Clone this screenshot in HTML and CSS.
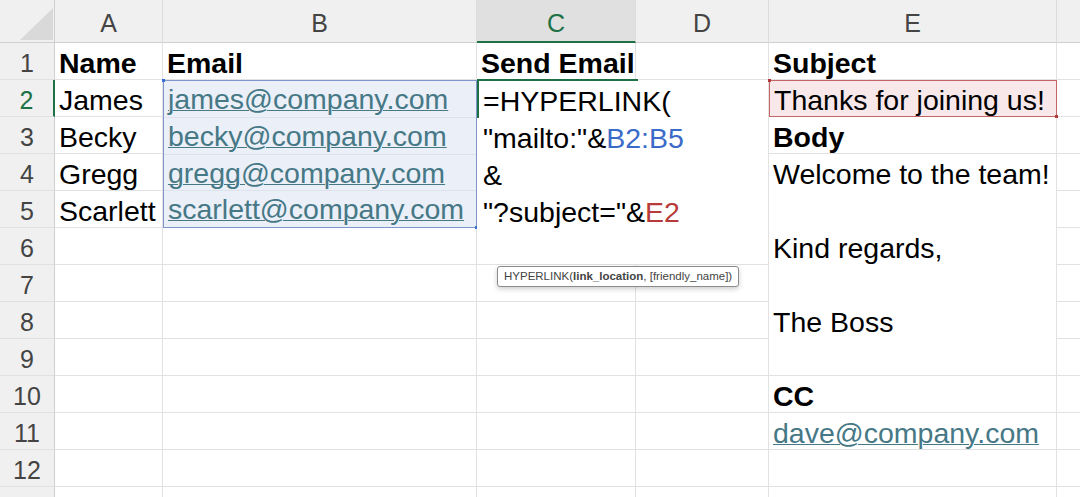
FILE: index.html
```html
<!DOCTYPE html>
<html>
<head>
    <meta charset="UTF-8">
    <title>Send Email</title>
    <link rel="stylesheet" href="styles.css">
</head>
<body>
    <div class="sheet">
        <!-- column headers -->
        <div class="corner">
            <svg width="54" height="42" viewBox="0 0 54 42"><polygon points="20,40 53,40 53,8" fill="#d9d9d9"/></svg>
        </div>
        <div class="ch">A</div>
        <div class="ch">B</div>
        <div class="ch ch-active">C</div>
        <div class="ch">D</div>
        <div class="ch">E</div>
        <div class="ch"></div>

        <!-- row 1 -->
        <div class="rh">1</div>
        <div class="cell b">Name</div>
        <div class="cell b">Email</div>
        <div class="cell b">Send Email</div>
        <div class="cell"></div>
        <div class="cell b">Subject</div>
        <div class="cell"></div>

        <!-- row 2 -->
        <div class="rh rh-active">2</div>
        <div class="cell">James</div>
        <div class="range">
            <div class="rc"><span class="link">james@company.com</span></div>
            <div class="rc"><span class="link">becky@company.com</span></div>
            <div class="rc"><span class="link">gregg@company.com</span></div>
            <div class="rc"><span class="link">scarlett@company.com</span></div>
        </div>
        <div class="editor">
            <div>=HYPERLINK(</div>
            <div>"mailto:"&amp;<span class="ref-b">B2:B5</span></div>
            <div>&amp;</div>
            <div>"?subject="&amp;<span class="ref-e">E2</span></div>
        </div>
        <div class="cell subject">Thanks for joining us!</div>
        <div class="cell"></div>

        <!-- row 3 -->
        <div class="rh">3</div>
        <div class="cell">Becky</div>
        <div class="cell b">Body</div>
        <div class="cell"></div>

        <!-- row 4 -->
        <div class="rh">4</div>
        <div class="cell">Gregg</div>
        <div class="body-text">Welcome to the team!<br><br>Kind regards,<br><br>The Boss</div>
        <div class="cell"></div>

        <!-- row 5 -->
        <div class="rh">5</div>
        <div class="cell">Scarlett</div>
        <div class="cell"></div>

        <!-- row 6 -->
        <div class="rh">6</div>
        <div class="cell"></div>
        <div class="cell"></div>
        <div class="cell"></div>

        <!-- row 7 -->
        <div class="rh">7</div>
        <div class="cell"></div>
        <div class="cell"></div>
        <div class="cell"></div>
        <div class="cell"></div>
        <div class="cell"></div>

        <!-- row 8 -->
        <div class="rh">8</div>
        <div class="cell"></div>
        <div class="cell"></div>
        <div class="cell"></div>
        <div class="cell"></div>
        <div class="cell"></div>

        <!-- row 9 -->
        <div class="rh">9</div>
        <div class="cell"></div>
        <div class="cell"></div>
        <div class="cell"></div>
        <div class="cell"></div>
        <div class="cell"></div>

        <!-- row 10 -->
        <div class="rh">10</div>
        <div class="cell"></div>
        <div class="cell"></div>
        <div class="cell"></div>
        <div class="cell"></div>
        <div class="cell b">CC</div>
        <div class="cell"></div>

        <!-- row 11 -->
        <div class="rh">11</div>
        <div class="cell"></div>
        <div class="cell"></div>
        <div class="cell"></div>
        <div class="cell"></div>
        <div class="cell"><span class="link">dave@company.com</span></div>
        <div class="cell"></div>

        <!-- row 12 -->
        <div class="rh">12</div>
        <div class="cell"></div>
        <div class="cell"></div>
        <div class="cell"></div>
        <div class="cell"></div>
        <div class="cell"></div>
        <div class="cell"></div>

        <!-- row 13 -->
        <div class="rh"></div>
        <div class="cell"></div>
        <div class="cell"></div>
        <div class="cell"></div>
        <div class="cell"></div>
        <div class="cell"></div>
        <div class="cell"></div>

        <div class="tooltip">HYPERLINK(<b>link_location</b>, [friendly_name])</div>
    </div>
</body>
</html>
```

FILE: styles.css
```css
* {
    box-sizing: border-box;
}

body {
    margin: 0;
    overflow: hidden;
    background-color: white;
    font-family: "Liberation Sans", Arial, sans-serif;
    color: #000;
}

.sheet {
    position: relative;
    height: 497px;
    overflow: hidden;
    display: grid;
    grid-template-columns: 55px 108px 314px 159px 133px 288px 60px;
    grid-template-rows: 43px repeat(13, 37px);
}

.corner {
    background-color: #f0f0f0;
    border-right: 1px solid #d0d0d0;
    border-bottom: 1px solid #d0d0d0;
}

.corner svg {
    display: block;
}

.ch {
    background-color: #f0f0f0;
    border-right: 1px solid #dcdcdc;
    border-bottom: 1px solid #cfcfcf;
    text-align: center;
    font-size: 25px;
    color: #444;
    padding-top: 5px;
    line-height: 37px;
}

.ch-active {
    background-color: #e0e0e0;
    color: #1e7145;
    border-bottom: 2px solid #1e7145;
}

.rh {
    background-color: #f0f0f0;
    border-right: 1px solid #cfcfcf;
    border-bottom: 1px solid #e0e0e0;
    text-align: center;
    font-size: 25px;
    color: #444;
    padding-top: 5px;
    line-height: 31px;
}

.rh-active {
    color: #1e7145;
    border-right: 2px solid #1e7145;
}

.cell {
    border-right: 1px solid #e2e2e2;
    border-bottom: 1px solid #e2e2e2;
    font-size: 28.5px;
    padding: 4px 0 0 4px;
    line-height: 32px;
    white-space: nowrap;
}

.b {
    font-weight: bold;
}

.link {
    color: #467886;
    text-decoration: underline;
    text-decoration-thickness: 1px;
}

/* B2:B5 highlighted by the formula */
.range {
    grid-column: 3;
    grid-row: 3 / 7;
    position: relative;
    display: flex;
    flex-direction: column;
    background-color: #eaeff8;
    border: 1px solid #7f96cc;
}

.range .rc {
    flex: 1;
    font-size: 28.5px;
    padding: 2px 0 0 4px;
    line-height: 33px;
    white-space: nowrap;
    border-bottom: 1px solid #dde2ec;
}

.range .rc:last-child {
    border-bottom: none;
}

.range::before,
.range::after,
.subject::before,
.subject::after {
    content: "";
    position: absolute;
    width: 3px;
    height: 3px;
}

.range::before {
    top: -2px;
    left: -2px;
    background-color: #3b6fd4;
}

.range::after {
    bottom: -2px;
    right: -2px;
    background-color: #3b6fd4;
}

/* C2 being edited */
.editor {
    grid-column: 4 / 6;
    grid-row: 3 / 8;
    position: relative;
    background-color: white;
    border-right: 1px solid #e2e2e2;
    border-bottom: 1px solid #e2e2e2;
    font-size: 28.5px;
    line-height: 37px;
    padding: 3px 0 0 6px;
    white-space: nowrap;
}

.editor::before {
    content: "";
    position: absolute;
    top: -1px;
    left: 0;
    width: 159px;
    height: 37px;
    border-top: 2px solid #1e7145;
    border-left: 2px solid #1e7145;
}

.ref-b {
    color: #3a6bc9;
}

.ref-e {
    color: #b83b3b;
}

.subject {
    position: relative;
    background-color: #f9e8ea;
    border: 1px solid #c46464;
    padding-top: 3px;
}

.subject::before {
    top: -2px;
    left: -2px;
    background-color: #b03a3a;
}

.subject::after {
    bottom: -2px;
    right: -2px;
    background-color: #b03a3a;
}

.body-text {
    grid-column: 6;
    grid-row: 5 / 11;
    border-right: 1px solid #e2e2e2;
    border-bottom: 1px solid #e2e2e2;
    font-size: 28.5px;
    line-height: 37px;
    padding: 2px 0 0 4px;
    white-space: nowrap;
}

.tooltip {
    position: absolute;
    top: 266px;
    left: 497px;
    height: 21px;
    padding: 0 6px;
    background-color: white;
    border: 1px solid #8c8c8c;
    border-radius: 3px;
    box-shadow: 0 2px 5px rgba(0,0,0,0.2);
    font-size: 11.5px;
    line-height: 19px;
    color: #444;
    white-space: nowrap;
}
```
